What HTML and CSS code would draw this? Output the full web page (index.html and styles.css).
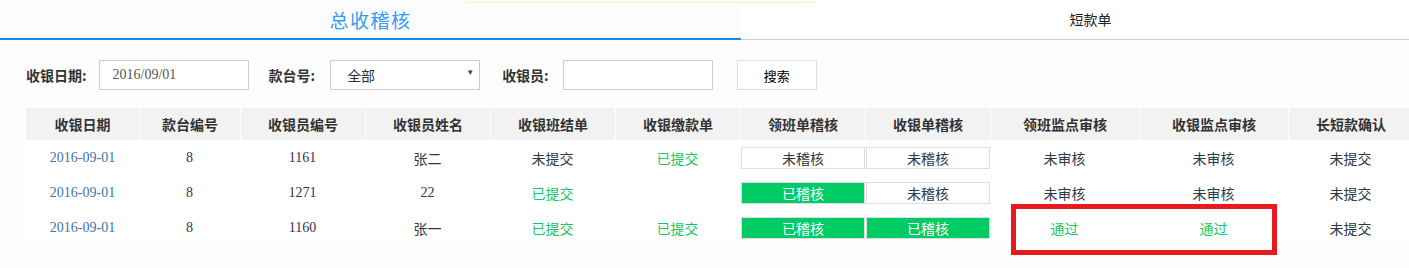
FILE: index.html
```html
<!DOCTYPE html>
<html lang="zh-CN">
<head>
  <meta charset="UTF-8">
  <meta name="viewport" content="width=device-width, initial-scale=1.0">
  <title>总收稽核</title>
  <link rel="stylesheet" href="styles.css">
</head>
<body>
  <div class="page">
    <div class="notice"></div>

    <div class="tabs">
      <div class="tab active">总收稽核</div>
      <div class="tab">短款单</div>
    </div>

    <div class="main">
      <div class="filters">
        <label class="filter-label">收银日期:</label>
        <input class="filter-input" type="text" value="2016/09/01">

        <label class="filter-label">款台号:</label>
        <div class="select-wrap">
          <select class="filter-select">
            <option>全部</option>
          </select>
          <span class="select-arrow">&#9660;</span>
        </div>

        <label class="filter-label cashier-label">收银员:</label>
        <input class="filter-input" type="text" value="">

        <button class="search-btn">搜索</button>
      </div>

      <div class="table-wrap">
        <table class="audit-table">
          <thead>
            <tr>
              <th class="col-date">收银日期</th>
              <th class="col-desk">款台编号</th>
              <th>收银员编号</th>
              <th>收银员姓名</th>
              <th>收银班结单</th>
              <th>收银缴款单</th>
              <th>领班单稽核</th>
              <th>收银单稽核</th>
              <th class="col-wide">领班监点审核</th>
              <th class="col-wide">收银监点审核</th>
              <th>长短款确认</th>
            </tr>
          </thead>
          <tbody>
            <tr>
              <td class="date">2016-09-01</td>
              <td class="num">8</td>
              <td class="num">1161</td>
              <td>张二</td>
              <td>未提交</td>
              <td class="ok">已提交</td>
              <td><span class="check">未稽核</span></td>
              <td><span class="check">未稽核</span></td>
              <td>未审核</td>
              <td>未审核</td>
              <td>未提交</td>
            </tr>
            <tr>
              <td class="date">2016-09-01</td>
              <td class="num">8</td>
              <td class="num">1271</td>
              <td class="num">22</td>
              <td class="ok">已提交</td>
              <td></td>
              <td><span class="check done">已稽核</span></td>
              <td><span class="check">未稽核</span></td>
              <td>未审核</td>
              <td>未审核</td>
              <td>未提交</td>
            </tr>
            <tr>
              <td class="date">2016-09-01</td>
              <td class="num">8</td>
              <td class="num">1160</td>
              <td>张一</td>
              <td class="ok">已提交</td>
              <td class="ok">已提交</td>
              <td><span class="check done">已稽核</span></td>
              <td><span class="check done">已稽核</span></td>
              <td class="ok">通过</td>
              <td class="ok">通过</td>
              <td>未提交</td>
            </tr>
          </tbody>
        </table>
        <div class="highlight"></div>
      </div>
    </div>
  </div>
</body>
</html>
```

FILE: styles.css
```css
html,
body {
  margin: 0;
  padding: 0;
  overflow: hidden;
  background-color: #fff;
}

body {
  font-family: "Liberation Serif", "Noto Sans CJK SC", serif;
  font-size: 14px;
  color: #333;
}

.page {
  position: relative;
  width: 1440px;
}

/* cut-off message box at the top */
.notice {
  position: absolute;
  top: -10px;
  left: 465px;
  width: 350px;
  height: 11px;
  background-color: #fffdf6;
  border: 1px solid #fbeed5;
  border-radius: 0 0 4px 4px;
}

.tabs {
  display: flex;
  height: 39px;
  border-bottom: 1px solid #ccc;
}

.tab {
  width: 699px;
  text-align: center;
  font-family: "Noto Sans CJK SC", sans-serif;
  font-size: 14px;
  line-height: 38px;
  color: #222;
}

.tab.active {
  width: 741px;
  height: 38px;
  font-size: 19px;
  letter-spacing: 1.5px;
  line-height: 40px;
  color: #3399ff;
  background-color: #fcfcfc;
  border-bottom: 2px solid #0a8cf0;
}

.main {
  background-color: #fdfdfd;
  padding: 20px 0 23px 26px;
}

.filters {
  display: flex;
  align-items: center;
  height: 30px;
}

.filter-label {
  font-family: "Noto Sans CJK SC", sans-serif;
  font-weight: bold;
  font-size: 14px;
  color: #333;
  margin-right: 12px;
}

.filter-label.cashier-label {
  margin-right: 14px;
}

.filters .filter-input:first-of-type {
  margin-right: 20px;
}

.filters .select-wrap {
  margin-left: 3px;
  margin-right: 22px;
}

.filter-input,
.filter-select {
  box-sizing: border-box;
  width: 150px;
  height: 30px;
  border: 1px solid #ccc;
  background-color: #fff;
  font-family: "Liberation Serif", "Noto Sans CJK SC", serif;
  font-size: 14px;
  color: #555;
  padding: 0 0 0 13px;
  margin: 0;
  outline: none;
}

.select-wrap {
  position: relative;
}

.filter-select {
  -webkit-appearance: none;
  appearance: none;
  padding-left: 16px;
  color: #333;
  font-family: "Noto Sans CJK SC", sans-serif;
}

.select-arrow {
  position: absolute;
  right: 6px;
  top: 8px;
  font-size: 8px;
  color: #444;
  pointer-events: none;
}

.search-btn {
  box-sizing: border-box;
  width: 80px;
  height: 30px;
  margin-left: 24px;
  border: 1px solid #ddd;
  background-color: #fff;
  font-family: "Noto Sans CJK SC", sans-serif;
  font-size: 13px;
  color: #000;
}

.table-wrap {
  position: relative;
  margin-top: 18px;
}

.audit-table {
  border-collapse: separate;
  border-spacing: 0;
  table-layout: fixed;
  width: 1387px;
}

.audit-table th {
  box-sizing: border-box;
  height: 32px;
  padding: 0;
  width: 125px;
  background-color: #f2f2f2;
  border-left: 1px solid #fff;
  font-family: "Noto Sans CJK SC", sans-serif;
  font-weight: bold;
  font-size: 14px;
  color: #333;
}

.audit-table th:first-child {
  border-left: none;
}

.audit-table th.col-date {
  width: 113px;
}

.audit-table th.col-desk {
  width: 101px;
}

.audit-table th.col-wide {
  width: 149px;
}

.audit-table td {
  height: 35px;
  padding: 0;
  text-align: center;
  background-color: #fff;
  font-family: "Noto Sans CJK SC", sans-serif;
  font-size: 14px;
  color: #2b3a48;
}

.audit-table td.date,
.audit-table td.num {
  font-family: "Liberation Serif", serif;
}

.audit-table td.date {
  color: #3c72b4;
}

.audit-table td.ok {
  color: #17c763;
}

.check {
  display: block;
  box-sizing: border-box;
  height: 22px;
  line-height: 20px;
  margin-left: 1px;
  border: 1px solid #ddd;
  background-color: #fff;
  color: #2b3a48;
}

.check.done {
  background-color: #00cc66;
  color: #fff;
}

/* annotation frame over the two audit columns */
.highlight {
  position: absolute;
  left: 985px;
  top: 96px;
  width: 266px;
  height: 51px;
  box-sizing: border-box;
  border: 5px solid #e8191f;
}
```
